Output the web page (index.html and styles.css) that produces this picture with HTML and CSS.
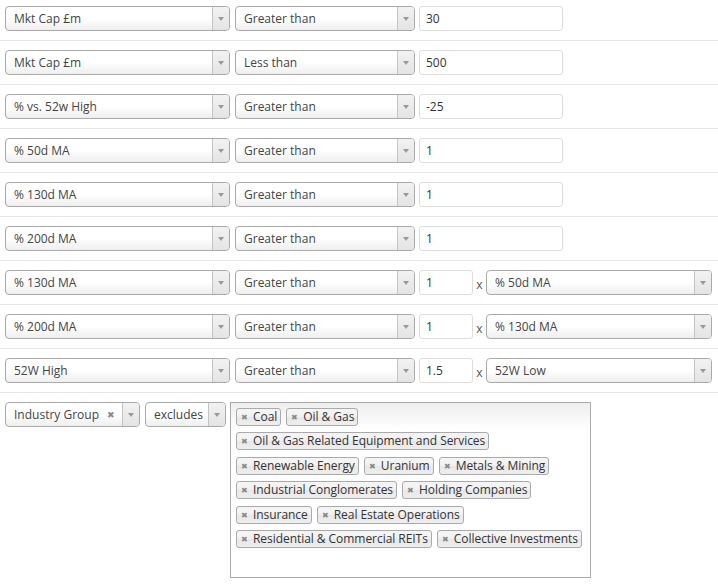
FILE: index.html
```html
<!DOCTYPE html>
<html>
<head>
<meta charset="utf-8">
<link rel="stylesheet" href="styles.css">
</head>
<body>
<div class="screener">
  <div class="row first">
    <div class="sel w-field"><span class="val">Mkt Cap £m</span><span class="arrow"><i></i></span></div>
    <div class="sel w-op"><span class="val">Greater than</span><span class="arrow"><i></i></span></div>
    <div class="inp w-num">30</div>
  </div>
  <div class="row">
    <div class="sel w-field"><span class="val">Mkt Cap £m</span><span class="arrow"><i></i></span></div>
    <div class="sel w-op"><span class="val">Less than</span><span class="arrow"><i></i></span></div>
    <div class="inp w-num">500</div>
  </div>
  <div class="row">
    <div class="sel w-field"><span class="val">% vs. 52w High</span><span class="arrow"><i></i></span></div>
    <div class="sel w-op"><span class="val">Greater than</span><span class="arrow"><i></i></span></div>
    <div class="inp w-num">-25</div>
  </div>
  <div class="row">
    <div class="sel w-field"><span class="val">% 50d MA</span><span class="arrow"><i></i></span></div>
    <div class="sel w-op"><span class="val">Greater than</span><span class="arrow"><i></i></span></div>
    <div class="inp w-num">1</div>
  </div>
  <div class="row">
    <div class="sel w-field"><span class="val">% 130d MA</span><span class="arrow"><i></i></span></div>
    <div class="sel w-op"><span class="val">Greater than</span><span class="arrow"><i></i></span></div>
    <div class="inp w-num">1</div>
  </div>
  <div class="row">
    <div class="sel w-field"><span class="val">% 200d MA</span><span class="arrow"><i></i></span></div>
    <div class="sel w-op"><span class="val">Greater than</span><span class="arrow"><i></i></span></div>
    <div class="inp w-num">1</div>
  </div>
  <div class="row">
    <div class="sel w-field"><span class="val">% 130d MA</span><span class="arrow"><i></i></span></div>
    <div class="sel w-op"><span class="val">Greater than</span><span class="arrow"><i></i></span></div>
    <div class="inp w-mult">1</div>
    <span class="times">x</span>
    <div class="sel w-ref"><span class="val">% 50d MA</span><span class="arrow"><i></i></span></div>
  </div>
  <div class="row">
    <div class="sel w-field"><span class="val">% 200d MA</span><span class="arrow"><i></i></span></div>
    <div class="sel w-op"><span class="val">Greater than</span><span class="arrow"><i></i></span></div>
    <div class="inp w-mult">1</div>
    <span class="times">x</span>
    <div class="sel w-ref"><span class="val">% 130d MA</span><span class="arrow"><i></i></span></div>
  </div>
  <div class="row">
    <div class="sel w-field"><span class="val">52W High</span><span class="arrow"><i></i></span></div>
    <div class="sel w-op"><span class="val">Greater than</span><span class="arrow"><i></i></span></div>
    <div class="inp w-mult">1.5</div>
    <span class="times">x</span>
    <div class="sel w-ref"><span class="val">52W Low</span><span class="arrow"><i></i></span></div>
  </div>
  <div class="row last">
    <div class="sel w-group"><span class="val">Industry Group</span><span class="clear">✖</span><span class="arrow"><i></i></span></div>
    <div class="sel w-excl"><span class="val">excludes</span><span class="arrow"><i></i></span></div>
    <div class="multi">
      <span class="tag"><b>✖</b>Coal</span><span class="tag"><b>✖</b>Oil &amp; Gas</span>
      <span class="tag"><b>✖</b>Oil &amp; Gas Related Equipment and Services</span>
      <span class="tag"><b>✖</b>Renewable Energy</span><span class="tag"><b>✖</b>Uranium</span><span class="tag"><b>✖</b>Metals &amp; Mining</span>
      <span class="tag"><b>✖</b>Industrial Conglomerates</span><span class="tag"><b>✖</b>Holding Companies</span>
      <span class="tag"><b>✖</b>Insurance</span><span class="tag"><b>✖</b>Real Estate Operations</span>
      <span class="tag"><b>✖</b>Residential &amp; Commercial REITs</span><span class="tag"><b>✖</b>Collective Investments</span>
    </div>
  </div>
</div>
</body>
</html>
```
FILE: styles.css
```css
html, body {
  margin: 0;
  padding: 0;
  background: #fff;
}
body {
  font-family: "Open Sans", "Liberation Sans", sans-serif;
  font-size: 12px;
  color: #444;
}
.screener {
  width: 718px;
}
.row {
  display: flex;
  align-items: center;
  padding: 9px 0 9px 5px;
  border-bottom: 1px solid #e6e6e6;
  height: 25px;
}
.row.first {
  padding-top: 6px;
}
.row.last {
  border-bottom: none;
  align-items: flex-start;
  height: auto;
}
.sel {
  box-sizing: border-box;
  height: 25px;
  border: 1px solid #aaa;
  border-radius: 4px;
  background: linear-gradient(to bottom, #ffffff 0%, #ffffff 50%, #eeeeee 100%);
  display: flex;
  align-items: center;
  overflow: hidden;
  flex: none;
}
.sel .val {
  flex: 1;
  padding-left: 8px;
  white-space: nowrap;
  color: #444;
}
.sel .arrow {
  width: 16px;
  height: 100%;
  border-left: 1px solid #c4c4c4;
  background: linear-gradient(to bottom, #f2f2f2 0%, #e4e4e4 100%);
  display: flex;
  align-items: center;
  justify-content: center;
}
.sel .arrow i {
  width: 0;
  height: 0;
  border-left: 3px solid transparent;
  border-right: 3px solid transparent;
  border-top: 4px solid #999;
  margin-top: 1px;
}
.sel .clear {
  font-size: 9px;
  color: #888;
  margin-right: 7px;
}
.w-field { width: 225px; margin-right: 5px; }
.w-op { width: 180px; margin-right: 4px; }
.w-ref { width: 226px; }
.w-group { width: 135px; margin-right: 5px; }
.w-excl { width: 81px; margin-right: 4px; }
.inp {
  box-sizing: border-box;
  height: 25px;
  border: 1px solid #ddd;
  border-radius: 3px;
  background: #fff;
  padding-left: 6px;
  display: flex;
  align-items: center;
  color: #333;
  flex: none;
}
.w-num { width: 144px; }
.w-mult { width: 54px; }
.times {
  width: 13px;
  text-align: center;
  color: #555;
  font-size: 12px;
  padding-top: 3px;
}
.multi {
  box-sizing: border-box;
  width: 361px;
  height: 176px;
  border: 1px solid #aaa;
  background: linear-gradient(to bottom, #eeeeee 0%, #ffffff 15%);
  padding: 1.5px 0 0 0;
  flex: none;
  display: flex;
  flex-wrap: wrap;
  align-content: flex-start;
}
.tag {
  box-sizing: border-box;
  height: 18px;
  margin: 3px 0 3.5px 5px;
  padding: 0 3px 0 16px;
  position: relative;
  border: 1px solid #aaa;
  border-radius: 3px;
  background: linear-gradient(to bottom, #f4f4f4 20%, #f0f0f0 50%, #e8e8e8 52%, #eeeeee 100%);
  color: #333;
  font-size: 12px;
  line-height: 16px;
  letter-spacing: -0.05px;
  white-space: nowrap;
}
.tag b {
  position: absolute;
  left: 4px;
  top: 0;
  font-size: 8px;
  font-weight: normal;
  color: #888;
}
```
